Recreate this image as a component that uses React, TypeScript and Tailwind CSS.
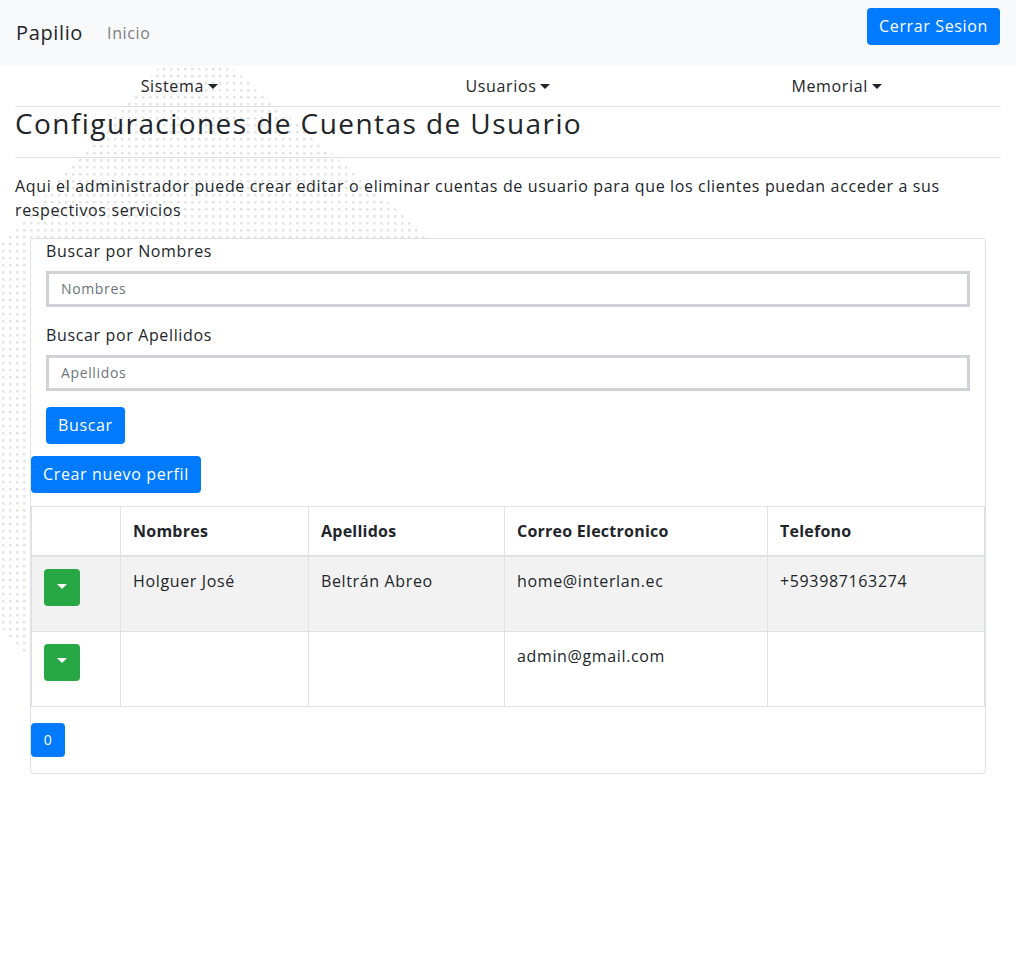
import React, { useState } from 'react';

const users = [
  { id: 1, nombres: 'Holguer José', apellidos: 'Beltrán Abreo', correo: 'home@interlan.ec', telefono: '+593987163274' },
  { id: 2, nombres: '', apellidos: '', correo: 'admin@gmail.com', telefono: '' },
];

function Caret({ className = '' }: { className?: string }) {
  return (
    <span className={`inline-block w-0 h-0 align-[0.2em] border-t-[0.32em] border-x-[0.32em] border-t-current border-x-transparent ${className}`}></span>
  );
}

function DotsBackdrop() {
  return (
    <svg className="absolute left-0 top-0 pointer-events-none" width="460" height="680" viewBox="0 0 460 680">
      <defs>
        <pattern id="dots" width="7" height="7" patternUnits="userSpaceOnUse">
          <rect x="2" y="2" width="2.5" height="2.5" fill="#e4e4e4" />
        </pattern>
      </defs>
      <polygon points="160,0 230,0 430,172 35,600 0,560 0,180" fill="url(#dots)" />
    </svg>
  );
}

export default function App() {
  const [nombres, setNombres] = useState('');
  const [apellidos, setApellidos] = useState('');

  return (
    <div className="min-h-[967px] bg-white text-[#212529] font-['Open_Sans',sans-serif] text-base leading-6 tracking-[0.04em]">
      <nav className="h-[66px] bg-[#f8f9fa] flex items-center px-4">
        <span className="text-xl mr-6">Papilio</span>
        <span className="text-[#7d7f81]">Inicio</span>
        <button className="ml-auto -mt-[14px] bg-[#007bff] text-white rounded px-3 py-[6px] leading-[25px]">Cerrar Sesion</button>
      </nav>

      <div className="relative px-[15px]">
        <div className="absolute inset-0 top-0">
          <DotsBackdrop />
        </div>
        <div className="relative">
          <div className="grid grid-cols-3 border-b border-[#dee2e6]">
            {['Sistema', 'Usuarios', 'Memorial'].map((item) => (
              <div key={item} className="py-2 text-center">
                {item}
                <Caret className="ml-1" />
              </div>
            ))}
          </div>

          <h3 className="text-[28px] leading-[1.2] font-normal tracking-[0.051em]">Configuraciones de Cuentas de Usuario</h3>
          <hr className="my-4 border-[#dee2e6]" />
          <p className="mb-4">
            Aqui el administrador puede crear editar o eliminar cuentas de usuario para que los clientes puedan acceder a sus respectivos servicios
          </p>

          <div className="mx-[15px] border border-[#dee2e6] rounded bg-white pb-4">
            <div className="px-[15px]">
              <label className="block mb-2">Buscar por Nombres</label>
              <input
                value={nombres}
                onChange={(e) => setNombres(e.target.value)}
                placeholder="Nombres"
                className="w-full h-[36px] border-[3px] border-[#cfd3d8] px-3 text-sm placeholder:text-[#6c757d] outline-none"
              />
              <label className="block mt-4 mb-2">Buscar por Apellidos</label>
              <input
                value={apellidos}
                onChange={(e) => setApellidos(e.target.value)}
                placeholder="Apellidos"
                className="w-full h-[36px] border-[3px] border-[#cfd3d8] px-3 text-sm placeholder:text-[#6c757d] outline-none"
              />
              <button className="mt-4 bg-[#007bff] text-white rounded px-3 py-[6px] leading-[25px]">Buscar</button>
            </div>

            <button className="mt-3 bg-[#007bff] text-white rounded px-3 py-[6px] leading-[25px]">Crear nuevo perfil</button>

            <table className="mt-[13px] w-full border-collapse table-fixed">
              <colgroup>
                <col className="w-[89px]" />
                <col className="w-[188px]" />
                <col className="w-[196px]" />
                <col className="w-[263px]" />
                <col />
              </colgroup>
              <thead>
                <tr className="h-[50px]">
                  <th className="border border-[#dee2e6] border-b-2"></th>
                  {['Nombres', 'Apellidos', 'Correo Electronico', 'Telefono'].map((h) => (
                    <th key={h} className="border border-[#dee2e6] border-b-2 px-3 text-left font-bold tracking-[0.015em]">{h}</th>
                  ))}
                </tr>
              </thead>
              <tbody>
                {users.map((u, i) => (
                  <tr key={u.id} className={`h-[75px] ${i % 2 === 0 ? 'bg-[#f2f2f2]' : ''}`}>
                    <td className="border border-[#dee2e6] align-top pl-3 pt-3">
                      <button className="w-9 h-[37px] bg-[#28a745] rounded text-white flex items-center justify-center pb-[3px]">
                        <Caret />
                      </button>
                    </td>
                    <td className="border border-[#dee2e6] align-top px-3 pt-3">{u.nombres}</td>
                    <td className="border border-[#dee2e6] align-top px-3 pt-3">{u.apellidos}</td>
                    <td className="border border-[#dee2e6] align-top px-3 pt-3">{u.correo}</td>
                    <td className="border border-[#dee2e6] align-top px-3 pt-3">{u.telefono}</td>
                  </tr>
                ))}
              </tbody>
            </table>

            <button className="mt-4 bg-[#007bff] text-white rounded w-[34px] h-[34px] text-sm">0</button>
          </div>
        </div>
      </div>
    </div>
  );
}
